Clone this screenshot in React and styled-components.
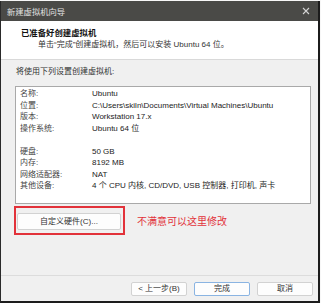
import React from "react";
import styled, { createGlobalStyle } from "styled-components";

const GlobalStyle = createGlobalStyle`
  html, body { margin: 0; padding: 0; background: #f7f7f7; }
  body { font-family: "Liberation Sans", "Noto Sans CJK SC", sans-serif; }
  * { box-sizing: border-box; }
`;

const Window = styled.div`
  width: 320px;
  height: 302px;
  margin-top: 1px;
  border-left: 1px solid #2a2a2a;
  border-right: 2px solid #1c1c1c;
  border-bottom: 2px solid #1c1c1c;
  display: flex;
  flex-direction: column;
  background: #f0f0f0;
`;

const TitleBar = styled.div`
  height: 20px;
  flex: none;
  background: #4a4a47;
  display: flex;
  align-items: center;
  justify-content: space-between;
  padding: 0 8px 0 6px;
  color: #e2e2e2;
  font-size: 8.3px;
`;

const Header = styled.div`
  height: 39px;
  flex: none;
  background: #ffffff;
  border-bottom: 1px solid #d9d9d9;
  padding: 6px 0 0 20px;
  display: flex;
  flex-direction: column;
`;

const HeaderTitle = styled.div`
  font-size: 8.4px;
  font-weight: bold;
  color: #111;
  line-height: 12px;
`;

const HeaderSub = styled.div`
  font-size: 8px;
  color: #333;
  line-height: 12px;
  padding-left: 17px;
`;

const Body = styled.div`
  flex: 1;
  display: flex;
  flex-direction: column;
  padding: 6px 7px 0 14px;
`;

const Intro = styled.div`
  font-size: 8px;
  line-height: 12px;
  color: #333;
  padding-left: 1px;
`;

const SummaryBox = styled.div`
  margin-top: 8px;
  height: 118px;
  background: #fff;
  border: 1px solid #a9a9a9;
  padding: 1px 0 0 4px;
  display: grid;
  grid-template-columns: 72px 1fr;
  grid-auto-rows: 11.55px;
  align-content: start;
  font-size: 8px;
  line-height: 11.55px;
  margin-right: 0;
`;

const Label = styled.div`
  color: #444;
  white-space: nowrap;
`;

const Value = styled.div`
  color: #1b1b1b;
  white-space: nowrap;
`;

const CustomRow = styled.div`
  margin-top: 2px;
  display: flex;
  align-items: center;
  margin-left: -1px;
`;

const Highlight = styled.div`
  width: 111px;
  height: 29px;
  border: 2px solid #e2323a;
  padding: 5px 2px 1px 1px;
  display: flex;
`;

const Button = styled.button`
  height: ${(p) => p.$h || 14}px;
  width: ${(p) => p.$w || 56}px;
  flex: none;
  background: #fdfdfd;
  border: 1px solid ${(p) => (p.$primary ? "#8ab4e2" : "#d2d2d2")};
  border-radius: 2px;
  font-family: "Liberation Sans", "Noto Sans CJK SC", sans-serif;
  font-size: 8px;
  color: #333;
  padding: 0;
  display: flex;
  align-items: center;
  justify-content: center;
  line-height: 1;
`;

const Note = styled.div`
  margin-left: 12px;
  font-size: 10px;
  color: #e2323a;
  font-family: "Noto Sans CJK SC", sans-serif;
  line-height: 12px;
  margin-top: 1px;
`;

const Footer = styled.div`
  height: 26px;
  flex: none;
  border-top: 1px solid #dcdcdc;
  display: flex;
  justify-content: flex-end;
  align-items: flex-start;
  gap: 7px;
  padding: 6px 5px 0 0;
`;

const rows = [
  ["名称:", "Ubuntu"],
  ["位置:", "C:\\Users\\skiln\\Documents\\Virtual Machines\\Ubuntu"],
  ["版本:", "Workstation 17.x"],
  ["操作系统:", "Ubuntu 64 位"],
  ["", ""],
  ["硬盘:", "50 GB"],
  ["内存:", "8192 MB"],
  ["网络适配器:", "NAT"],
  ["其他设备:", "4 个 CPU 内核, CD/DVD, USB 控制器, 打印机, 声卡"],
];

const CloseIcon = () => (
  <svg width="8" height="8" viewBox="0 0 8 8">
    <path d="M1 1L7 7M7 1L1 7" stroke="#d4d4d4" strokeWidth="1.1" />
  </svg>
);

export default function App() {
  return (
    <>
      <GlobalStyle />
      <Window>
        <TitleBar>
          <span>新建虚拟机向导</span>
          <CloseIcon />
        </TitleBar>
        <Header>
          <HeaderTitle>已准备好创建虚拟机</HeaderTitle>
          <HeaderSub>单击“完成”创建虚拟机，然后可以安装 Ubuntu 64 位。</HeaderSub>
        </Header>
        <Body>
          <Intro>将使用下列设置创建虚拟机:</Intro>
          <SummaryBox>
            {rows.map(([l, v], i) => (
              <React.Fragment key={i}>
                <Label>{l}</Label>
                <Value>{v}</Value>
              </React.Fragment>
            ))}
          </SummaryBox>
          <CustomRow>
            <Highlight>
              <Button $w={104} $h={17}>自定义硬件(C)...</Button>
            </Highlight>
            <Note>不满意可以这里修改</Note>
          </CustomRow>
        </Body>
        <Footer>
          <Button>&lt; 上一步(B)</Button>
          <Button $primary>完成</Button>
          <Button>取消</Button>
        </Footer>
      </Window>
    </>
  );
}
